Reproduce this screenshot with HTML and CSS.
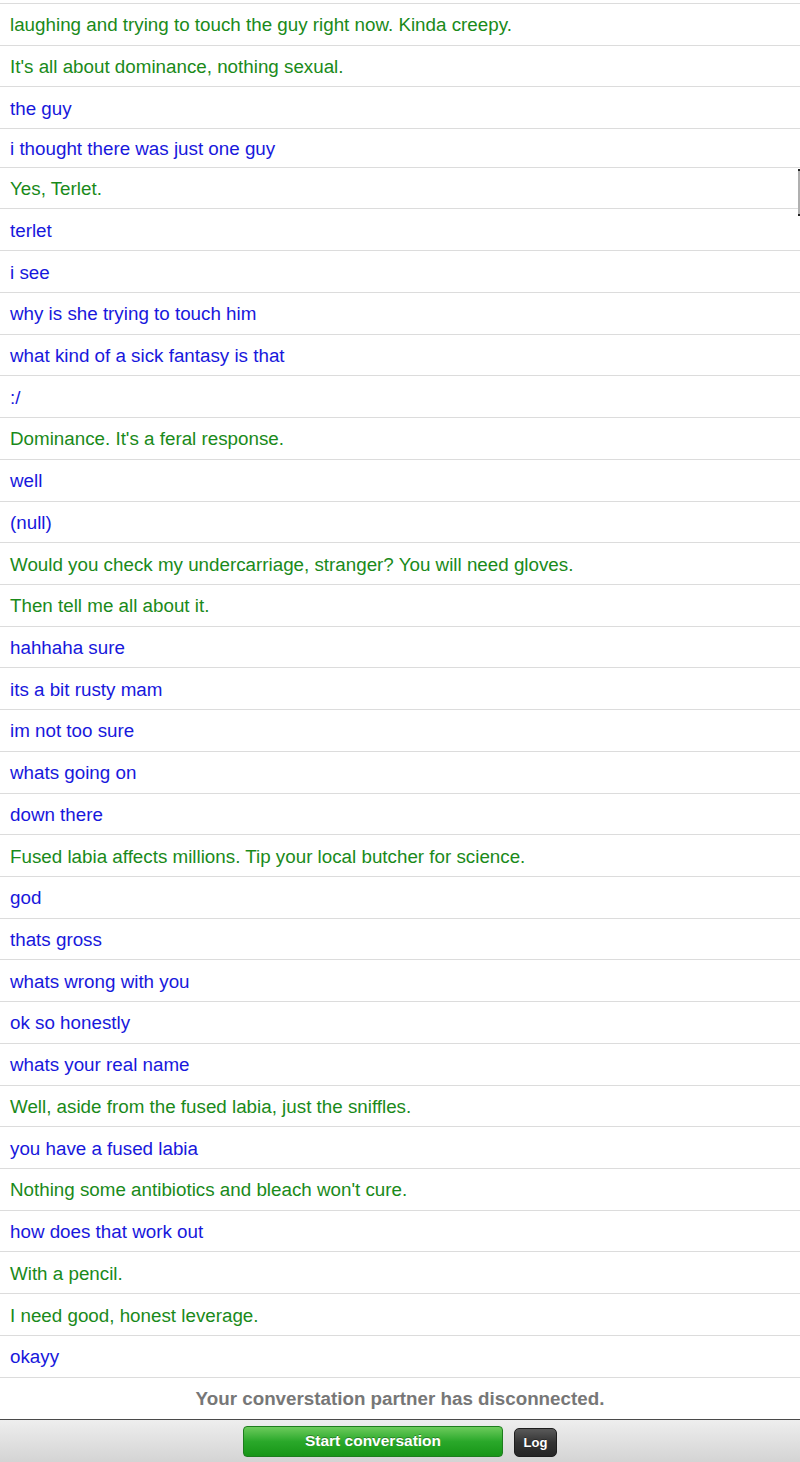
FILE: index.html
```html
<!DOCTYPE html>
<html lang="en">
<head>
    <meta charset="UTF-8">
    <meta name="viewport" content="width=device-width, initial-scale=1.0">
    <title>Chat</title>
    <link rel="stylesheet" href="styles.css">
</head>
<body>
    <div class="chat">
        <div class="msg them">laughing and trying to touch the guy right now. Kinda creepy.</div>
        <div class="msg them">It's all about dominance, nothing sexual.</div>
        <div class="msg you">the guy</div>
        <div class="msg you short">i thought there was just one guy</div>
        <div class="msg them">Yes, Terlet.</div>
        <div class="msg you">terlet</div>
        <div class="msg you">i see</div>
        <div class="msg you">why is she trying to touch him</div>
        <div class="msg you">what kind of a sick fantasy is that</div>
        <div class="msg you">:/</div>
        <div class="msg them">Dominance. It's a feral response.</div>
        <div class="msg you">well</div>
        <div class="msg you">(null)</div>
        <div class="msg them">Would you check my undercarriage, stranger? You will need gloves.</div>
        <div class="msg them">Then tell me all about it.</div>
        <div class="msg you">hahhaha sure</div>
        <div class="msg you">its a bit rusty mam</div>
        <div class="msg you">im not too sure</div>
        <div class="msg you">whats going on</div>
        <div class="msg you">down there</div>
        <div class="msg them">Fused labia affects millions. Tip your local butcher for science.</div>
        <div class="msg you">god</div>
        <div class="msg you">thats gross</div>
        <div class="msg you">whats wrong with you</div>
        <div class="msg you">ok so honestly</div>
        <div class="msg you">whats your real name</div>
        <div class="msg them">Well, aside from the fused labia, just the sniffles.</div>
        <div class="msg you">you have a fused labia</div>
        <div class="msg them">Nothing some antibiotics and bleach won't cure.</div>
        <div class="msg you">how does that work out</div>
        <div class="msg them">With a pencil.</div>
        <div class="msg them">I need good, honest leverage.</div>
        <div class="msg you">okayy</div>
        <div class="status">Your converstation partner has disconnected.</div>

        <!-- scroll indicator -->
        <div class="scrollbar"></div>
    </div>

    <div class="toolbar">
        <button class="btn-start">Start conversation</button>
        <button class="btn-log">Log</button>
    </div>
</body>
</html>
```

FILE: styles.css
```css
body {
    font-family: "Liberation Sans", Arial, Helvetica, sans-serif;
    margin: 0;
    padding: 0;
    background-color: #ffffff;
    width: 800px;
    height: 1462px;
    overflow: hidden;
}
.chat {
    position: relative;
    padding-top: 3px;
}
.chat::before {
    content: "";
    display: block;
    border-top: 1px solid #dcdcdc;
}
.msg {
    box-sizing: border-box;
    height: 41.72px;
    padding-left: 10px;
    padding-top: 2px;
    display: flex;
    align-items: center;
    font-size: 18.8px;
    border-bottom: 1px solid #dcdcdc;
    white-space: nowrap;
}
.msg.short {
    height: 38.6px;
}
.them {
    color: #1a8a1a;
}
.you {
    color: #1818dc;
}
.status {
    height: 41px;
    padding-top: 1px;
    box-sizing: border-box;
    display: flex;
    align-items: center;
    justify-content: center;
    font-size: 18.8px;
    font-weight: bold;
    color: #777777;
}
.scrollbar {
    position: absolute;
    top: 169px;
    right: 0;
    width: 2px;
    height: 47px;
    background-color: #b0b0b0;
    border-top: 2px solid #222;
    border-bottom: 2px solid #222;
    box-sizing: border-box;
}
.toolbar {
    box-sizing: border-box;
    height: 44px;
    border-top: 1px solid #4a4a4a;
    background: linear-gradient(#eeeeee, #d3d3d3);
    display: flex;
    justify-content: center;
    align-items: flex-end;
    gap: 11px;
    padding-bottom: 6px;
}
button {
    font-family: "Liberation Sans", Arial, Helvetica, sans-serif;
    font-weight: bold;
    color: white;
    cursor: pointer;
    padding: 0;
    text-shadow: 0 -1px 0 rgba(0,0,0,0.3);
}
.btn-start {
    width: 260px;
    height: 31px;
    font-size: 15.5px;
    border: 1px solid #1d7d1d;
    border-radius: 4px;
    background: linear-gradient(#6ccb5c, #2aa82a 50%, #179617);
}
.btn-log {
    width: 43px;
    height: 29px;
    font-size: 13px;
    border: 1px solid #1e1e1e;
    border-radius: 5px;
    background: linear-gradient(#5a5a5a, #333333 50%, #262626);
}
```
